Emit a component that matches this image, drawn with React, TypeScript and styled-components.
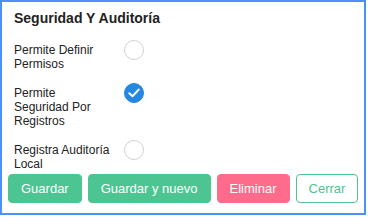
import React, { useState } from "react";
import styled, { createGlobalStyle } from "styled-components";

const GlobalStyle = createGlobalStyle`
  html, body {
    margin: 0;
    padding: 0;
    background: #fff;
  }
  * {
    box-sizing: border-box;
  }
`;

const Card = styled.div`
  width: 366px;
  height: 215px;
  border: 2px solid #4d8ffd;
  background: #fff;
  padding: 8px 6px 0;
  font-family: "Liberation Sans", Arial, sans-serif;
  color: #212529;
  display: flex;
  flex-direction: column;
`;

const Body = styled.div`
  padding: 0 6px;
  display: flex;
  flex-direction: column;
`;

const Title = styled.h3`
  margin: 0 0 17px;
  font-size: 14px;
  font-weight: 700;
  line-height: normal;
  color: #222;
`;

const Fields = styled.div`
  display: flex;
  flex-direction: column;
  gap: 15px;
`;

const Row = styled.label`
  display: flex;
  align-items: flex-start;
  cursor: pointer;
`;

const Label = styled.span`
  width: 110px;
  padding-right: 13px;
  font-size: 12px;
  line-height: normal;
  color: #222;
`;

const Circle = styled.span<{ $checked: boolean }>`
  width: 20px;
  height: 20px;
  margin-top: -3px;
  border-radius: 50%;
  border: 1px solid ${(p) => (p.$checked ? "#2487e0" : "#d3d3d3")};
  background: ${(p) => (p.$checked ? "#2487e0" : "#fff")};
  display: flex;
  align-items: center;
  justify-content: center;
  flex-shrink: 0;
`;

const Footer = styled.div`
  margin-top: 3px;
  display: flex;
  gap: 6px;
`;

const Button = styled.button<{ $variant: "green" | "pink" | "outline" }>`
  font-family: "Liberation Sans", Arial, sans-serif;
  font-size: 13px;
  line-height: 15px;
  padding: 6px 12px;
  border-radius: 4px;
  white-space: nowrap;
  flex-shrink: 0;
  cursor: pointer;
  border: 1px solid
    ${(p) => (p.$variant === "pink" ? "#fe6b8b" : "#4cc593")};
  background: ${(p) =>
    p.$variant === "green"
      ? "#4cc593"
      : p.$variant === "pink"
      ? "#fe6b8b"
      : "#fff"};
  color: ${(p) => (p.$variant === "outline" ? "#4cc593" : "#fff")};
`;

const CheckMark = () => (
  <svg width="12" height="10" viewBox="0 0 12 10">
    <path
      d="M1.3 5.2 L4.5 8.2 L10.7 1.6"
      fill="none"
      stroke="#fff"
      strokeWidth="2"
      strokeLinecap="round"
      strokeLinejoin="round"
    />
  </svg>
);

const fields = [
  { id: "permisos", text: "Permite Definir Permisos", checked: false },
  { id: "registros", text: "Permite Seguridad Por Registros", checked: true },
  { id: "auditoria", text: "Registra Auditoría Local", checked: false },
];

const App = () => {
  const [values, setValues] = useState(
    fields.reduce<Record<string, boolean>>((acc, f) => {
      acc[f.id] = f.checked;
      return acc;
    }, {})
  );

  const toggle = (id: string) => {
    setValues({ ...values, [id]: !values[id] });
  };

  return (
    <>
      <GlobalStyle />
      <Card>
        <Body>
          <Title>Seguridad Y Auditoría</Title>
          <Fields>
            {fields.map((f) => (
              <Row key={f.id} onClick={() => toggle(f.id)}>
                <Label>{f.text}</Label>
                <Circle $checked={values[f.id]}>
                  {values[f.id] && <CheckMark />}
                </Circle>
              </Row>
            ))}
          </Fields>
        </Body>
        <Footer>
          <Button $variant="green">Guardar</Button>
          <Button $variant="green">Guardar y nuevo</Button>
          <Button $variant="pink">Eliminar</Button>
          <Button $variant="outline">Cerrar</Button>
        </Footer>
      </Card>
    </>
  );
};

export default App;
